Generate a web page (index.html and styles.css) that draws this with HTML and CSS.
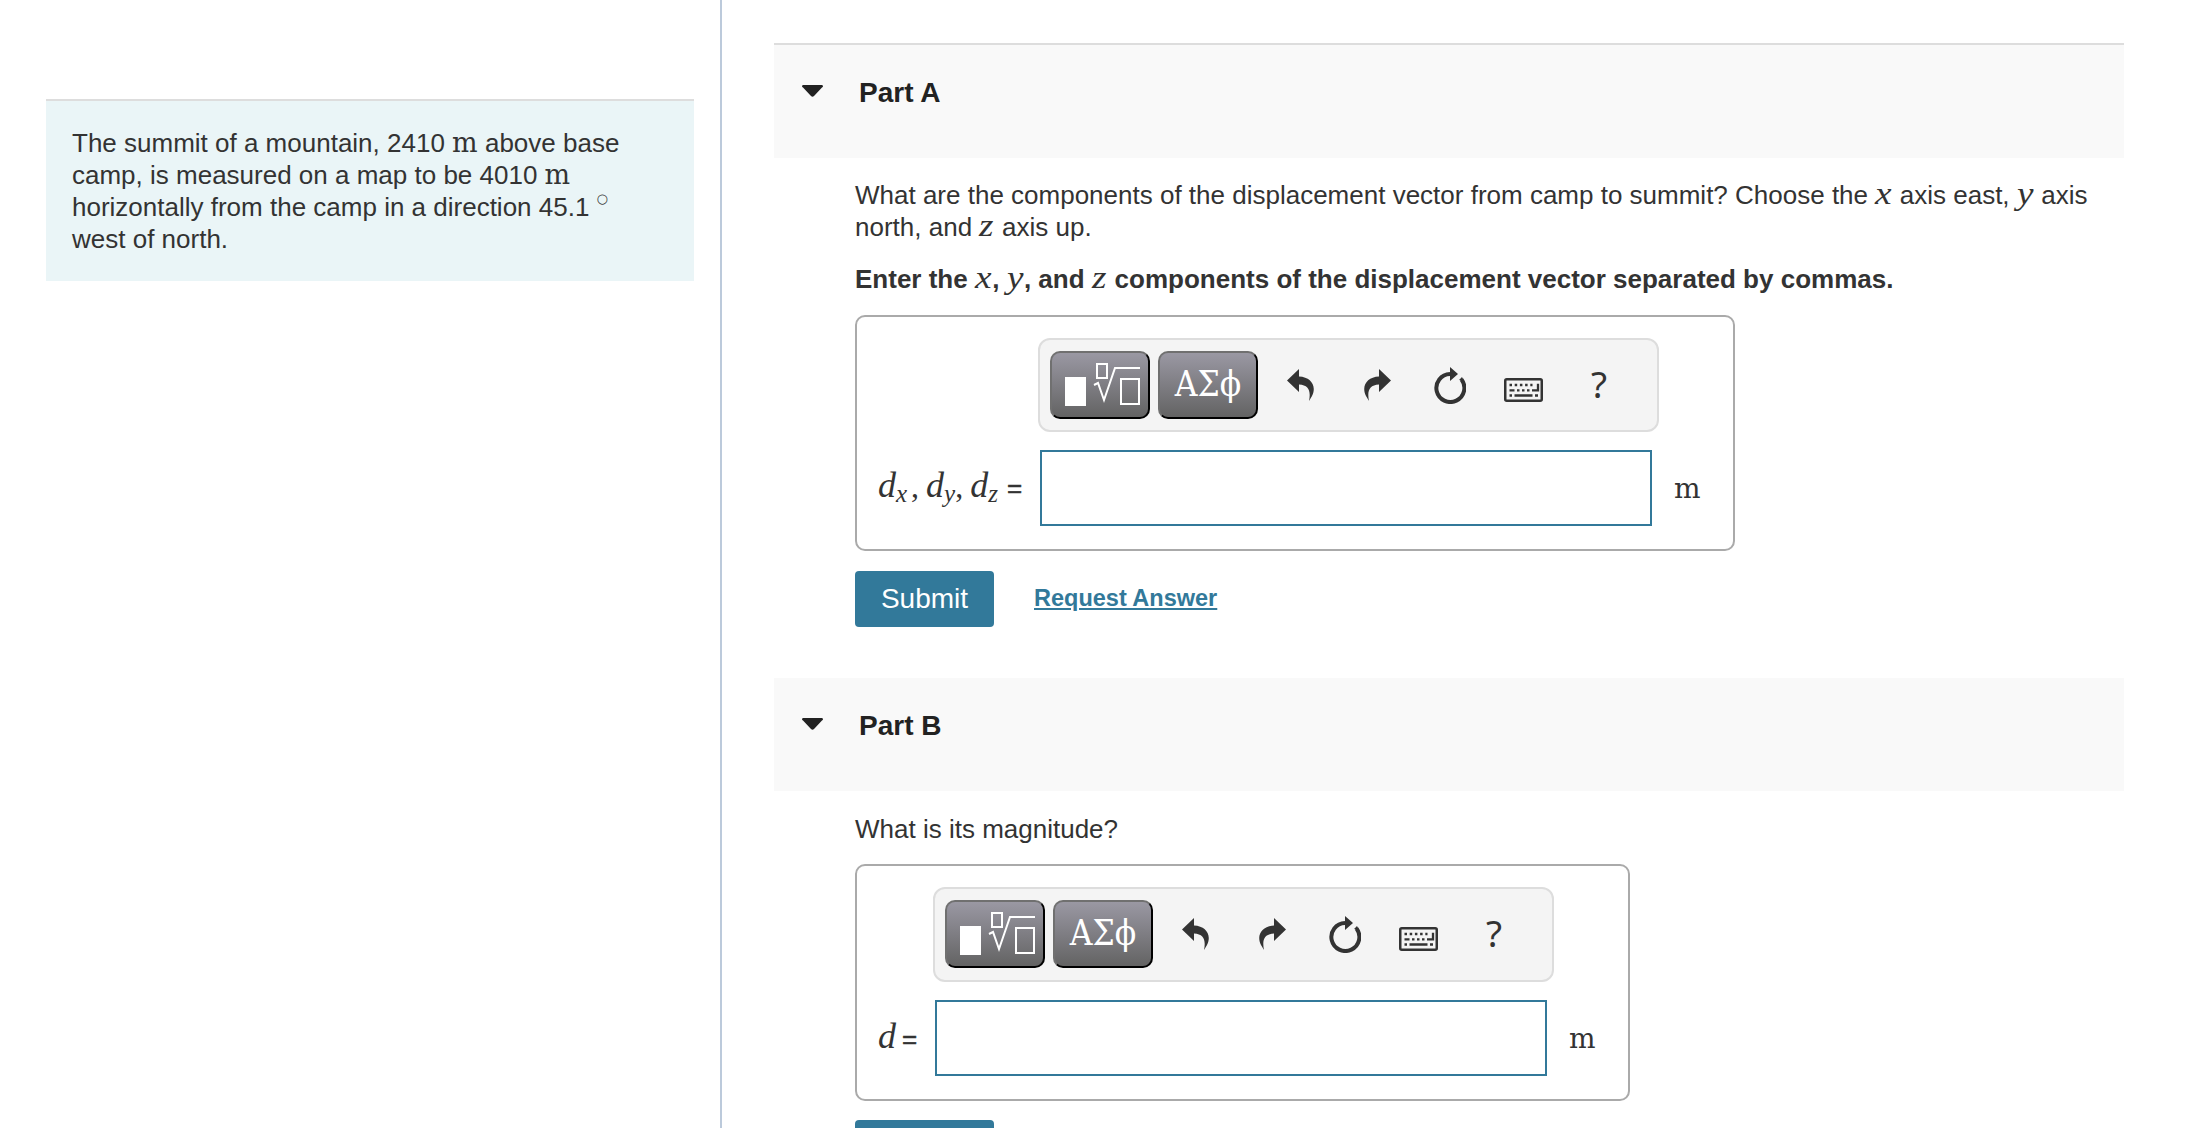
FILE: index.html
```
<!DOCTYPE html>
<html lang="en">
<head>
    <meta charset="UTF-8">
    <title>Displacement vector</title>
    <link rel="stylesheet" href="styles.css">
</head>
<body>
    <svg class="defs">
        <symbol id="template" viewBox="0 0 76 44">
            <g fill="none" stroke="#fff" stroke-width="2">
                <rect x="1" y="15" width="19" height="27" fill="#fff"/>
                <rect x="32" y="1" width="10" height="14"/>
                <path d="M29 22l4-2 6 17L50 5h25"/>
                <rect x="56" y="16" width="18" height="25"/>
            </g>
        </symbol>
        <symbol id="undo" viewBox="0 0 27 32">
            <path fill="#333" d="M0 11.500L12 0v7.500C24 8 30 17 25 27L22 32C24 22 22 16 12 15.500V23z"/>
        </symbol>
        <symbol id="reset" viewBox="0 0 32 37">
            <path fill="none" stroke="#333" stroke-width="4" d="M16 7A14 14 0 1 0 27.500 12.500"/>
            <path fill="#333" d="M16 0l8 7-8 7zM25 13l3-3 2 4z"/>
        </symbol>
        <symbol id="keyboard" viewBox="0 0 39 24">
            <rect x="1.250" y="1.250" width="36.500" height="21.500" rx="1.500" fill="none" stroke="#333" stroke-width="2.500"/>
            <path fill="none" stroke="#333" stroke-width="2.300" d="M5.500 7h23" stroke-dasharray="2.500 2.700"/>
            <path fill="none" stroke="#333" stroke-width="2.300" d="M5.500 12.300h5m2.500 0h2.500m2.500 0h2.500m2.500 0h2.500m2.500 0H34V5.700M5.500 17.500h2.500m2.500 0h18m2.500 0h3"/>
        </symbol>
    </svg>
    <div class="page">
        <aside class="sidebar">
            <div class="problem">
                The summit of a mountain, 2410 <span class="unit">m</span> above base camp, is measured on a map to be 4010 <span class="unit">m</span> horizontally from the camp in a direction 45.1 <span class="degree">○</span> west of north.
            </div>
        </aside>
        <main class="content">
            <section class="part">
                <header class="part-header first">
                    <svg class="arrow" viewBox="0 0 21 12"><path d="M1 0h19q2 1 0 2.500L12 11q-1.500 1.500-3 0L1 2.500Q-1 1 1 0z"/></svg>
                    <h2>Part A</h2>
                </header>
                <div class="part-body">
                    <p>What are the components of the displacement vector from camp to summit? Choose the <i>x</i> axis east, <i>y</i> axis north, and <i>z</i> axis up.</p>
                    <p class="instructions">Enter the <i>x</i>, <i>y</i>, and <i>z</i> components of the displacement vector separated by commas.</p>
                    <div class="answer answer-a">
                        <div class="toolbar">
                            <button class="tool"><svg class="template"><use href="#template"/></svg></button>
                            <button class="tool greek">ΑΣϕ</button>
                            <svg class="undo"><use href="#undo"/></svg>
                            <svg class="redo"><use href="#undo"/></svg>
                            <svg class="reset"><use href="#reset"/></svg>
                            <svg class="keyboard"><use href="#keyboard"/></svg>
                            <span class="help">?</span>
                        </div>
                        <label class="label"><i>d<sub>x</sub></i><span class="comma gap">,</span><i>d<sub>y</sub></i><span class="comma">,</span><i>d<sub>z</sub></i><span class="equals">=</span></label>
                        <input type="text" class="field">
                        <span class="unit">m</span>
                    </div>
                    <div class="actions">
                        <button class="submit">Submit</button>
                        <a class="request">Request Answer</a>
                    </div>
                </div>
            </section>
            <section class="part">
                <header class="part-header">
                    <svg class="arrow" viewBox="0 0 21 12"><path d="M1 0h19q2 1 0 2.500L12 11q-1.500 1.500-3 0L1 2.500Q-1 1 1 0z"/></svg>
                    <h2>Part B</h2>
                </header>
                <div class="part-body">
                    <p class="question-b">What is its magnitude?</p>
                    <div class="answer answer-b">
                        <div class="toolbar">
                            <button class="tool"><svg class="template"><use href="#template"/></svg></button>
                            <button class="tool greek">ΑΣϕ</button>
                            <svg class="undo"><use href="#undo"/></svg>
                            <svg class="redo"><use href="#undo"/></svg>
                            <svg class="reset"><use href="#reset"/></svg>
                            <svg class="keyboard"><use href="#keyboard"/></svg>
                            <span class="help">?</span>
                        </div>
                        <label class="label"><i>d</i><span class="equals">=</span></label>
                        <input type="text" class="field">
                        <span class="unit">m</span>
                    </div>
                    <div class="actions">
                        <button class="submit"></button>
                    </div>
                </div>
            </section>
        </main>
    </div>
</body>
</html>
```
FILE: styles.css
```
* {
    box-sizing: border-box;
}
body {
    margin: 0;
    background-color: #fff;
    color: #333;
    font-family: "Liberation Sans", Arial, sans-serif;
    font-size: 26px;
    line-height: 32px;
}
.defs {
    display: none;
}
.page {
    display: flex;
    height: 1128px;
    overflow: hidden;
}
.sidebar {
    width: 722px;
    flex: none;
    padding: 99px 26px 0 46px;
    border-right: 2px solid #bccadb;
}
.problem {
    height: 182px;
    padding: 26px 60px 0 26px;
    border-top: 2px solid #ddd;
    background-color: #eaf5f7;
}
.content {
    flex: none;
    width: 1402px;
    padding: 43px 0 0 52px;
}
.part-header {
    display: flex;
    height: 113px;
    padding: 25px 0 0 28px;
    background-color: #f9f9f9;
    color: #222;
}
.part-header.first {
    height: 115px;
    border-top: 2px solid #ddd;
}
.arrow {
    width: 21px;
    height: 12px;
    margin: 15px 36px 0 0;
    fill: #222;
}
h2 {
    margin: 7px 0 0;
    font-size: 28px;
    line-height: 32px;
}
.part-body {
    padding: 21px 0 0 81px;
}
p {
    margin: 0 0 20px;
}
.instructions {
    font-weight: bold;
}
.question-b {
    padding-top: 1px;
    margin-bottom: 19px;
}
p i,
.label i {
    font-family: "Liberation Serif", serif;
    font-weight: normal;
    font-size: 31px;
    line-height: 20px;
}
p i {
    display: inline-block;
    margin-right: 3.500px;
    transform: scaleX(1.200);
    transform-origin: left;
}
.unit {
    font-family: "DejaVu Serif", serif;
    font-size: 27px;
    line-height: 20px;
}
.degree {
    font-family: "DejaVu Sans", sans-serif;
    font-size: 13px;
    line-height: 0;
    vertical-align: 13px;
}
.answer {
    display: grid;
    grid-template-rows: 94px 76px;
    row-gap: 18px;
    height: 236px;
    padding: 21px 0 0 21px;
    border: 2px solid #aaa;
    border-radius: 10px;
}
.answer-a {
    width: 880px;
    grid-template-columns: 160px 621px 1fr;
}
.answer-b {
    width: 775px;
    height: 237px;
    grid-template-columns: 55px 621px 1fr;
    grid-template-rows: 95px 76px;
}
.toolbar {
    grid-column: 2 / 4;
    width: 621px;
    display: flex;
    align-items: flex-start;
    padding: 11px 0 0 10px;
    border: 2px solid #ddd;
    border-radius: 12px;
    background-color: #f4f4f4;
}
.tool {
    width: 100px;
    height: 68px;
    margin-right: 8px;
    padding: 0;
    border: 2px outset #555;
    border-color: #707070 #222 #222 #707070;
    border-radius: 10px;
    background: linear-gradient(#9a98a3, #636363);
    color: #fff;
}
.template {
    display: block;
    width: 76px;
    height: 44px;
    margin: -1px 0 0 13px;
}
.greek {
    padding-bottom: 2px;
    font-family: "DejaVu Serif Condensed", "DejaVu Serif", serif;
    font-size: 35px;
}
.undo,
.redo {
    width: 27px;
    height: 32px;
    margin: 18px 0 0 21px;
}
.redo {
    margin-left: 50px;
    transform: scaleX(-1);
}
.reset {
    width: 32px;
    height: 37px;
    margin: 16px 0 0 43px;
}
.keyboard {
    width: 39px;
    height: 24px;
    margin: 27px 0 0 38px;
}
.help {
    margin: 17px 0 0 48px;
    font-family: "Noto Sans", sans-serif;
    font-size: 37px;
    line-height: 32px;
}
.label {
    white-space: nowrap;
    padding-top: 18px;
    line-height: 36px;
}
.answer-b .label {
    padding-top: 21px;
}
.label i {
    font-size: 36px;
}
.label sub {
    font-size: 25px;
    line-height: 0;
    vertical-align: -5px;
}
.comma {
    font-family: "Liberation Serif", serif;
    font-size: 32px;
    margin-right: 7px;
}
.gap {
    margin-left: 4px;
}
.equals {
    margin-left: 9px;
    -webkit-text-stroke: 0.500px #333;
}
.answer-b .equals {
    margin-left: 6px;
}
.field {
    width: 612px;
    height: 76px;
    margin-left: 2px;
    border: 2px solid #32799a;
    background-color: #fff;
}
.answer > .unit {
    padding: 29px 0 0 15px;
    font-size: 28px;
}
.actions {
    display: flex;
    align-items: flex-start;
    height: 76px;
    margin: 20px 0 32px;
}
.answer-a + .actions {
    margin-bottom: 31px;
}
.answer-b + .actions {
    margin-top: 19px;
}
.submit {
    width: 139px;
    height: 56px;
    padding: 0;
    border: 0;
    border-radius: 4px;
    background-color: #32799a;
    color: #fff;
    font-family: inherit;
    font-size: 28px;
}
.request {
    margin: 11px 0 0 40px;
    color: #32799a;
    font-size: 23.500px;
    font-weight: bold;
    text-decoration: underline;
}
```
